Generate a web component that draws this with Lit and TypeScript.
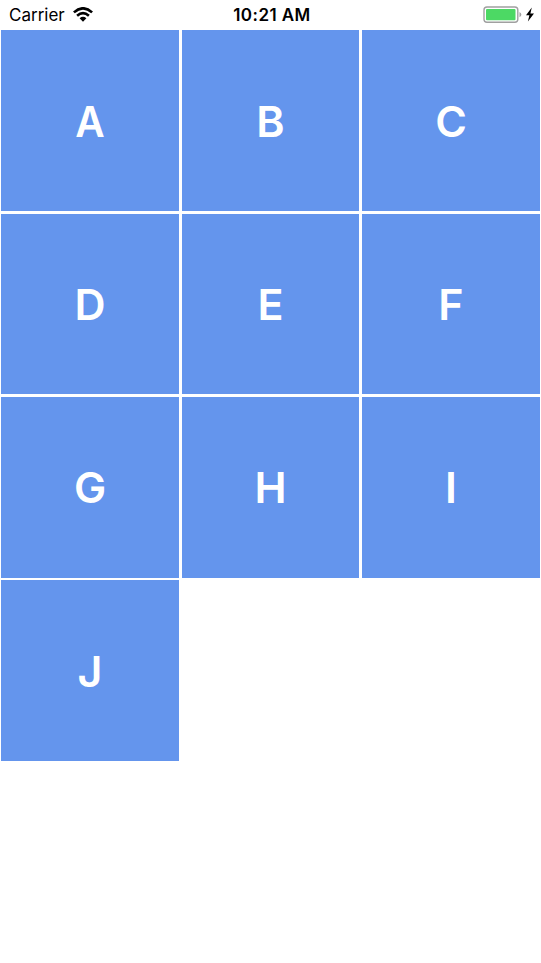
import { LitElement, html, css } from "lit";
import { customElement } from "lit/decorators.js";

@customElement("app-root")
class AppRoot extends LitElement {
  static styles = css`
    :host { display: block; height: 963px; background: #fff; overflow: hidden; font-family: Inter, sans-serif; color: #000; }
    .status { height: 30.2px; box-sizing: border-box; display: grid; grid-template-columns: 1fr auto 1fr; align-items: center; padding: 0 6px 0 9px; }
    .left { display: flex; align-items: center; gap: 8px; font-size: 17px; }
    .time { font-size: 17px; font-weight: 580; letter-spacing: 0.45px; }
    .right { display: flex; justify-content: flex-end; }
    svg { display: block; }
    .grid { display: grid; grid-template-columns: 178px 177px 178px; grid-auto-rows: 180.6px; column-gap: 3px; row-gap: 2.8px; padding-left: 1px; }
    .cell { box-sizing: border-box; padding-top: 0.35px; background: #6495ed; color: #fff; display: flex; align-items: center; justify-content: center; font-size: 43px; font-weight: 580; }
    .narrow { transform: translateX(0.4px) scaleX(0.94); }
  `;
  render() {
    return html`
      <div class="status">
        <div class="left"><span>Carrier</span>
          <svg width="22" height="16" viewBox="0 0 22 16"><path d="M.9 5.400Q10-2.800 19.100 5.400M4.100 8.700Q10 3.500 15.900 8.700" fill="none" stroke="#000" stroke-width="2.6"/><path d="M6.600 11.200Q10 8.300 13.400 11.200L10 14.800Z"/></svg>
        </div>
        <span class="time">10:21 AM</span>
        <div class="right">
          <svg width="52" height="18" viewBox="0 0 52 18"><rect x="1" y="1" width="33.800" height="15.200" rx="3" fill="none" stroke="#a0a0a0" stroke-width="1.400"/><rect x="3" y="3" width="29.500" height="11.200" rx="1" fill="#4cd964"/><path d="M36.500 6q3.800 2.600 0 5.200z" fill="#a0a0a0"/><path d="M48.800 1.600L43 9.200H46.400L44.900 15.400L51 7.400H47.400Z"/></svg>
        </div>
      </div>
      <div class="grid">${[..."ABCDEFGHIJ"].map((l) => html`<div class="cell"><span class=${l === "A" ? "narrow" : ""}>${l}</span></div>`)}</div>
    `;
  }
}
